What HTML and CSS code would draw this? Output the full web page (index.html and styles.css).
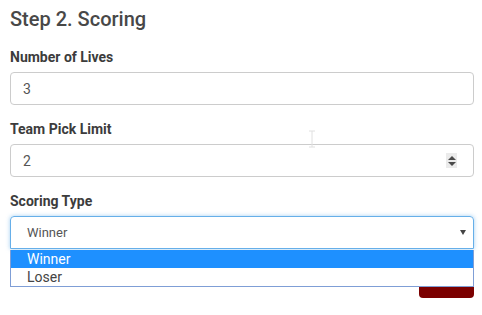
FILE: index.html
```html
<!DOCTYPE html>
<html lang="en">
<head>
    <meta charset="UTF-8">
    <title>Step 2. Scoring</title>
    <link rel="stylesheet" href="styles.css">
</head>
<body>
    <div class="step">
        <h3>Step 2. Scoring</h3>

        <div class="form-group">
            <label>Number of Lives</label>
            <div class="form-control">3</div>
        </div>

        <div class="form-group">
            <label>Team Pick Limit</label>
            <div class="form-control">
                <span class="value">2</span>
                <span class="spinner">
                    <svg width="10" height="12" viewBox="0 0 10 12">
                        <path d="M5 1 L9 5 L1 5 Z" fill="#4a4a4a"/>
                        <path d="M1 7 L9 7 L5 11 Z" fill="#4a4a4a"/>
                    </svg>
                </span>
            </div>
        </div>

        <div class="form-group select-group">
            <label>Scoring Type</label>
            <div class="form-control focused">
                <span class="value">Winner</span>
                <svg class="caret" width="6" height="5" viewBox="0 0 6 5">
                    <path d="M0 0 H6 L3 5 Z" fill="#444"/>
                </svg>
            </div>
            <ul class="options">
                <li class="selected">Winner</li>
                <li>Loser</li>
            </ul>
        </div>

        <div class="actions">
            <button type="button" class="btn-next">Next</button>
        </div>

        <svg class="cursor" width="8" height="18" viewBox="0 0 8 18">
            <path d="M1 1 H7 M4 1 V17 M1 17 H7" stroke="#e0e0e0" stroke-width="1" fill="none"/>
        </svg>
    </div>
</body>
</html>
```

FILE: styles.css
```css
body {
    margin: 0;
    font-family: Roboto, "Liberation Sans", sans-serif;
    font-size: 14px;
    color: #555;
    background: #fff;
}
.step {
    position: relative;
    padding: 0 8px 0 10px;
}
h3 {
    margin: 0;
    padding: 6px 0 16px 0;
    font-size: 20px;
    line-height: 26px;
    font-weight: 500;
    color: #484848;
}
.form-group {
    margin-bottom: 15px;
}
label {
    display: block;
    font-weight: bold;
    line-height: 18px;
    margin-bottom: 6px;
    color: #3c3c3c;
}
.form-control {
    display: flex;
    align-items: center;
    box-sizing: border-box;
    height: 33px;
    padding: 0 12px;
    border: 1px solid #ccc;
    border-radius: 4px;
    color: #555;
}
.form-control .value {
    flex: 1;
}
.spinner {
    display: flex;
    align-items: center;
    justify-content: center;
    width: 11px;
    height: 15px;
    margin-right: 4px;
    background: #ebebeb;
}
.focused {
    padding: 0 7px 0 16px;
    font-size: 13px;
    border-color: #66afe9;
    box-shadow: 0 0 4px rgba(102, 175, 233, 0.6);
    border-bottom-left-radius: 0;
    border-bottom-right-radius: 0;
}
.select-group {
    position: relative;
}
.options {
    position: absolute;
    left: 0;
    right: 0;
    top: 58px;
    margin: 0;
    padding: 0;
    list-style: none;
    border: 1px solid #7f9ed6;
    border-top: none;
    background: #fff;
    z-index: 2;
}
.options li {
    height: 18px;
    line-height: 18px;
    padding-left: 16px;
    font-size: 14px;
    color: #444;
}
.options li.selected {
    background: #1e90ff;
    color: #fff;
}
.actions {
    display: flex;
    justify-content: flex-end;
}
.btn-next {
    width: 55px;
    height: 34px;
    border: none;
    border-radius: 4px;
    background: #7b0000;
    color: #fff;
    font-family: inherit;
    font-size: 14px;
}
.cursor {
    position: absolute;
    left: 308px;
    top: 130px;
}
```
